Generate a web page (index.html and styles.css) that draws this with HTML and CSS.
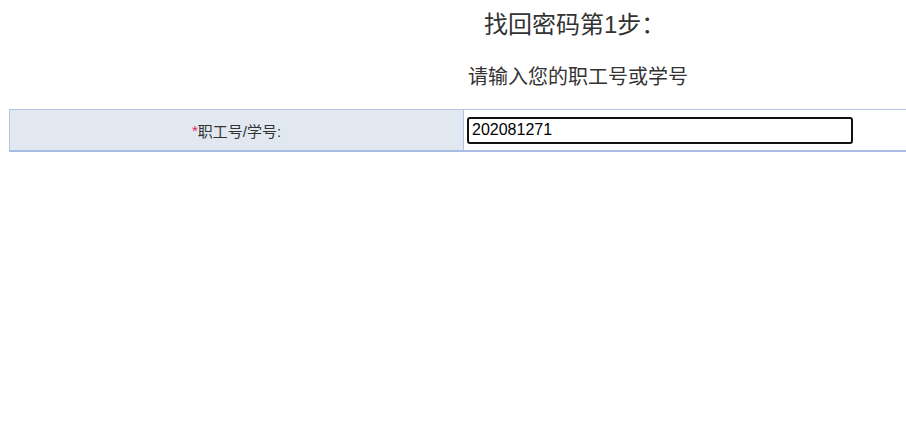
FILE: index.html
```html
<!DOCTYPE html>
<html lang="zh-CN">
<head>
<meta charset="utf-8">
<title>找回密码</title>
<link rel="stylesheet" href="styles.css">
</head>
<body>
<div class="page">
  <h1 class="title">找回密码第1步：</h1>
  <p class="subtitle">请输入您的职工号或学号</p>
  <div class="form-row">
    <div class="label-cell"><span class="req">*</span>职工号/学号:</div>
    <div class="value-cell"><input class="field" type="text" value="202081271"></div>
  </div>
</div>
</body>
</html>
```
FILE: styles.css
```css
html, body {
  overflow: hidden;
}
body {
  margin: 0;
  background: #fff;
  font-family: "Liberation Sans", "Noto Sans CJK SC", sans-serif;
  color: #333;
}
.page {
  padding: 0 0 0 9px;
  width: 1200px;
}
.title {
  margin: 0;
  padding: 9px 0 0 475px;
  font-size: 24px;
  font-weight: normal;
  line-height: 32px;
  color: #333;
}
.subtitle {
  margin: 0;
  padding: 22px 0 0 459px;
  font-size: 20px;
  line-height: 28px;
  color: #333;
}
.form-row {
  margin-top: 18px;
  display: flex;
  border-top: 1px solid #b4c3e3;
  border-left: 1px solid #b4c3e3;
  border-bottom: 2px solid #a9bce6;
  height: 40px;
}
.label-cell {
  width: 453px;
  background: #e1e8f0;
  border-right: 1px solid #b4c3e3;
  display: flex;
  align-items: center;
  justify-content: center;
  font-size: 15px;
  color: #333;
}
.req {
  color: #e0245e;
}
.value-cell {
  flex: 1;
  display: flex;
  align-items: center;
  padding-left: 3px;
}
.field {
  box-sizing: border-box;
  width: 386px;
  height: 27px;
  border: 2px solid #111;
  border-radius: 3px;
  padding: 0 3px;
  font-family: "Liberation Sans", sans-serif;
  font-size: 16px;
  color: #000;
  outline: none;
}
```
